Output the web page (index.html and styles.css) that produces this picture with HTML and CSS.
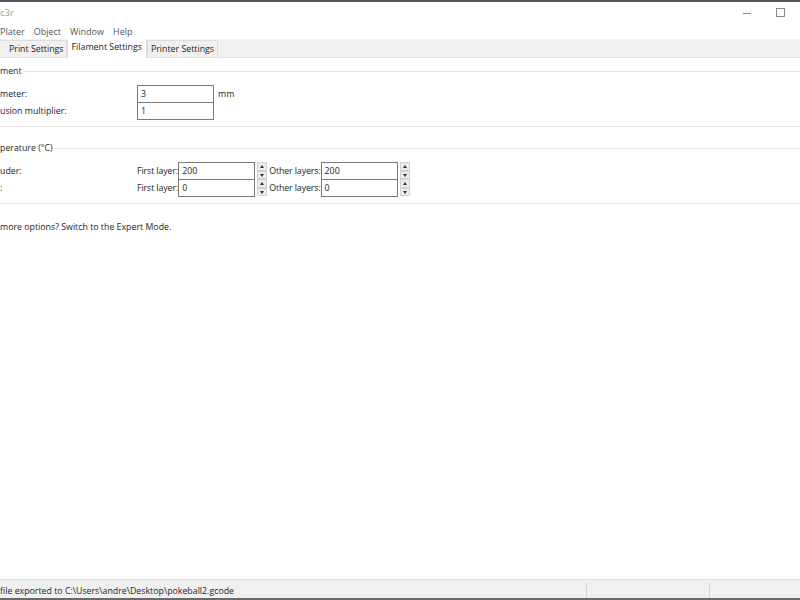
FILE: index.html
```html
<!DOCTYPE html>
<html>
<head>
<meta charset="utf-8">
<link rel="stylesheet" href="styles.css">
</head>
<body>
<div class="window">
  <div class="titlebar">
    <span class="title">c3r</span>
    <div class="controls">
      <span class="ctl min"></span>
      <span class="ctl max"></span>
    </div>
  </div>
  <div class="menubar">
    <span class="menu first">Plater</span>
    <span class="menu">Object</span>
    <span class="menu">Window</span>
    <span class="menu">Help</span>
  </div>
  <div class="tabbar">
    <span class="tab t1">Print Settings</span>
    <span class="tab active">Filament Settings</span>
    <span class="tab t3">Printer Settings</span>
  </div>
  <div class="content">
    <div class="group g1">
      <div class="gtitle"><span>ment</span><span class="gline"></span></div>
      <div class="row">
        <span class="lbl">meter:</span>
        <span class="input w77">3</span>
        <span class="unit">mm</span>
      </div>
      <div class="row">
        <span class="lbl">usion multiplier:</span>
        <span class="input w77">1</span>
      </div>
    </div>
    <div class="group g2">
      <div class="gtitle"><span>perature (°C)</span><span class="gline"></span></div>
      <div class="row">
        <span class="lbl">uder:</span>
        <span class="sub">First layer:</span>
        <span class="input w77">200</span>
        <span class="spin"><span class="up"></span><span class="dn"></span></span>
        <span class="sub">Other layers:</span>
        <span class="input w77">200</span>
        <span class="spin"><span class="up"></span><span class="dn"></span></span>
      </div>
      <div class="row">
        <span class="lbl">:</span>
        <span class="sub">First layer:</span>
        <span class="input w77">0</span>
        <span class="spin"><span class="up"></span><span class="dn"></span></span>
        <span class="sub">Other layers:</span>
        <span class="input w77">0</span>
        <span class="spin"><span class="up"></span><span class="dn"></span></span>
      </div>
    </div>
    <div class="hint">more options? Switch to the Expert Mode.</div>
  </div>
  <div class="statusbar">
    <span class="status">file exported to C:\Users\andre\Desktop\pokeball2.gcode</span>
    <span class="sep s1"></span>
    <span class="sep s2"></span>
  </div>
</div>
</body>
</html>
```

FILE: styles.css
```css
* { box-sizing: border-box; }
html, body { margin: 0; padding: 0; }
body {
  width: 800px;
  height: 600px;
  overflow: hidden;
  font-family: "Open Sans", "Noto Sans", sans-serif;
  font-size: 8.8px;
  color: #1e1e1e;
  background: #fff;
}
.window {
  width: 800px;
  height: 600px;
  display: flex;
  flex-direction: column;
  border-top: 2px solid #555;
  border-bottom: 2px solid #6a6a6a;
}
.titlebar {
  height: 21px;
  display: flex;
  align-items: center;
  justify-content: space-between;
  background: #fff;
}
.title { color: #9a9a9a; font-size: 9.5px; }
.controls { display: flex; align-items: center; gap: 25px; padding-right: 15px; }
.ctl { display: block; }
.ctl.min { width: 8px; height: 1px; background: #888; margin-top: 1px; }
.ctl.max { width: 9px; height: 9px; border: 1px solid #888; }
.menubar {
  height: 16px;
  display: flex;
  align-items: center;
  gap: 9px;
  background: #fff;
  font-size: 9px;
}
.menu { color: #555; }
.tabbar {
  height: 19px;
  display: flex;
  align-items: flex-end;
  background: #f0f0f0;
  border-bottom: 1px solid #e3e3e3;
}
.tab {
  height: 17px;
  display: flex;
  align-items: center;
  padding: 0 3px;
  border: 1px solid #dcdcdc;
  border-bottom: none;
  background: #f0f0f0;
  color: #222;
}
.tab.t1 { padding: 0 2px 0 9px; border-left: none; }
.tab.active {
  height: 19px;
  background: #fff;
  margin-bottom: -1px;
  padding: 0 4px 3px;
  border-top: none;
}
.content {
  flex: 1;
  background: #fff;
  padding-top: 6px;
}
.group {
  border-bottom: 1px solid #e3e3e3;
  padding-bottom: 7px;
  margin-bottom: 14px;
}
.group.g2 { margin-bottom: 17px; }
.gtitle {
  display: flex;
  align-items: center;
  height: 14px;
}
.gline {
  flex: 1;
  height: 1px;
  background: #e3e3e3;
  margin-left: 2px;
}
.row {
  display: flex;
  align-items: center;
  height: 17px;
}
.gtitle + .row { margin-top: 7px; }
.lbl { width: 137px; }
.sub { letter-spacing: -0.1px; }
.input {
  height: 18px;
  border: 1px solid #7a7a7a;
  padding-left: 3px;
  display: flex;
  align-items: center;
  background: #fff;
}
.w77 { width: 77px; }
.unit { margin-left: 4px; }
.spin {
  width: 10px;
  height: 17px;
  margin: 0 2px 0 2px;
  display: flex;
  flex-direction: column;
}
.spin .up, .spin .dn {
  flex: 1;
  background: #ececec;
  border: 1px solid #d2d2d2;
  position: relative;
}
.spin .up::after, .spin .dn::after {
  content: "";
  position: absolute;
  left: 2px;
  top: 2px;
  border-left: 2px solid transparent;
  border-right: 2px solid transparent;
}
.spin .up::after { border-bottom: 3px solid #333; }
.spin .dn::after { border-top: 3px solid #333; }
.statusbar {
  height: 19px;
  display: flex;
  align-items: center;
  background: #f0f0f0;
  border-top: 1px solid #e0e0e0;
  padding-top: 3px;
}
.status { flex: 1; }
.sep { width: 1px; height: 15px; background: #d6d6d6; }
.s1 { margin-right: 122px; }
.s2 { margin-right: 90px; }
```
